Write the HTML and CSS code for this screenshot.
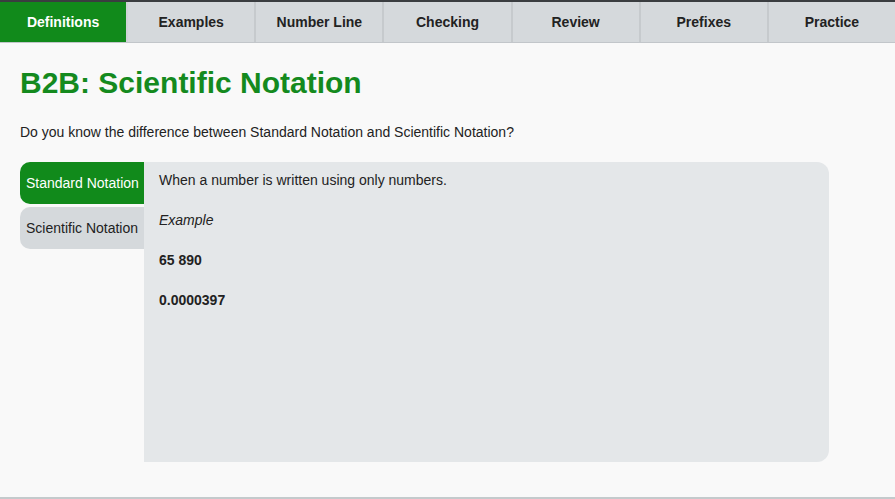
FILE: index.html
```html
<!DOCTYPE html>
<html>
<head>
<meta charset="utf-8">
<link rel="stylesheet" href="styles.css">
</head>
<body>
<div class="page">
  <nav class="tabs">
    <div class="tab active">Definitions</div>
    <div class="tab">Examples</div>
    <div class="tab">Number Line</div>
    <div class="tab">Checking</div>
    <div class="tab">Review</div>
    <div class="tab">Prefixes</div>
    <div class="tab">Practice</div>
  </nav>
  <main class="main">
    <h1 class="title">B2B: Scientific Notation</h1>
    <p class="intro">Do you know the difference between Standard Notation and Scientific Notation?</p>
    <div class="vtabs">
      <div class="vtab-list">
        <div class="vtab active">Standard Notation</div>
        <div class="vtab">Scientific Notation</div>
      </div>
      <div class="panel">
        <p>When a number is written using only numbers.</p>
        <p><em>Example</em></p>
        <p><strong>65 890</strong></p>
        <p><strong>0.0000397</strong></p>
      </div>
    </div>
  </main>
</div>
</body>
</html>
```
FILE: styles.css
```css
html, body {
  margin: 0;
  padding: 0;
}
body {
  background: #f9f9f9;
  font-family: "Liberation Sans", Arial, sans-serif;
  color: #222;
  font-size: 14px;
}
.page {
  height: 497px;
  border-bottom: 2px solid #c4cacc;
  overflow: hidden;
}
.tabs {
  display: flex;
  border-top: 2px solid #3a3d40;
  border-bottom: 1px solid #c2c6ca;
  height: 40px;
}
.tab {
  flex: 1;
  display: flex;
  align-items: center;
  justify-content: center;
  background: #d5d9dc;
  border-left: 2px solid #c6cacd;
  font-weight: bold;
  font-size: 14px;
  color: #222;
}
.tab:first-child {
  border-left: none;
}
.tab.active {
  background: #118a1b;
  color: #fff;
}
.tab.active + .tab {
  border-left: 2px solid #d0d4d7;
}
.main {
  padding: 0 20px;
}
.title {
  margin: 22px 0 0;
  font-size: 30px;
  line-height: 36px;
  color: #148a1e;
  font-weight: bold;
}
.intro {
  margin: 21px 0 0;
  line-height: 20px;
}
.vtabs {
  display: flex;
  margin-top: 20px;
}
.vtab-list {
  display: flex;
  flex-direction: column;
  gap: 3px;
  width: 124px;
}
.vtab {
  height: 42px;
  display: flex;
  align-items: center;
  padding-left: 6px;
  border-radius: 10px 0 0 10px;
  background: #d5d9dc;
  color: #222;
  white-space: nowrap;
}
.vtab.active {
  background: #118a1b;
  color: #fff;
}
.panel {
  width: 655px;
  height: 292px;
  padding: 8px 15px 0;
  background: #e4e7e9;
  border-radius: 0 12px 12px 0;
}
.panel p {
  margin: 0 0 20px;
  line-height: 20px;
}
```
